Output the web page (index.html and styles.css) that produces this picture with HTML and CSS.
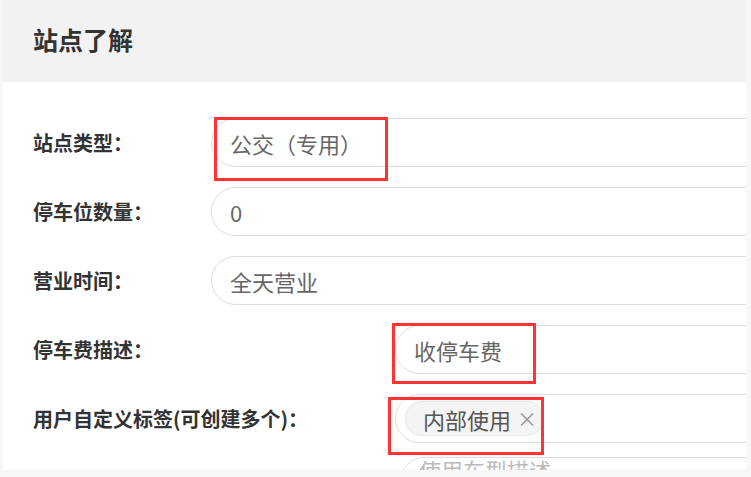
FILE: index.html
```
<!doctype html>
<html>
    <head>
        <meta http-equiv="Content-Type" content="text/html; charset=utf-8">
        <link rel="stylesheet" href="styles.css">
    </head>
    <body>
        <div class="page">
            <div class="panel">
                <div class="panel-head">站点了解</div>
                <div class="panel-body">
                    <div class="row">
                        <div class="label">站点类型：</div>
                        <div class="field">公交（专用）</div>
                    </div>
                    <div class="row">
                        <div class="label">停车位数量：</div>
                        <div class="field">0</div>
                    </div>
                    <div class="row">
                        <div class="label">营业时间：</div>
                        <div class="field">全天营业</div>
                    </div>
                    <div class="row">
                        <div class="label">停车费描述：</div>
                        <div class="field field-far">收停车费</div>
                    </div>
                    <div class="row">
                        <div class="label">用户自定义标签(可创建多个)：</div>
                        <div class="field field-far field-tags">
                            <span class="tag">内部使用<span class="tag-close">×</span></span>
                        </div>
                    </div>
                    <div class="row row-tail">
                        <div class="field field-tail placeholder">使用车型描述</div>
                    </div>
                </div>
            </div>
            <!-- 标注框 -->
            <div class="mark mark-type"></div>
            <div class="mark mark-fee"></div>
            <div class="mark mark-tags"></div>
        </div>
    </body>
</html>
```

FILE: styles.css
```
html, body{
    margin: 0;
    padding: 0;
    background: #f7f7f7;
    font-family: "Noto Sans CJK SC", "Noto Sans", sans-serif;
}
.page{
    position: relative;
    width: 751px;
    height: 477px;
    overflow: hidden;
}
.panel{
    margin: 0 5px 0 3px;
    height: 470px;
    background: #fff;
    overflow: hidden;
}
.panel-head{
    height: 82px;
    line-height: 78px;
    padding-left: 30px;
    background: #f2f2f2;
    color: #333;
    font-size: 25px;
    font-weight: bold;
}
.panel-body{
    padding: 36px 0 0 30px;
}
.row{
    display: flex;
    align-items: center;
    margin-bottom: 20px;
}
.label{
    width: 178px;
    flex: none;
    white-space: nowrap;
    color: #333;
    font-size: 20px;
    font-weight: bold;
}
.field{
    flex: none;
    width: 640px;
    height: 49px;
    box-sizing: border-box;
    border: 1px solid #ddd;
    border-radius: 25px;
    padding-left: 18px;
    display: flex;
    align-items: center;
    color: #666;
    font-size: 22px;
}
.field-far{
    margin-left: 184px;
}
.field-tags{
    padding-left: 9px;
}
.row-tail{
    margin-top: -6px;
}
.field-tail{
    margin-left: 367px;
    align-items: flex-start;
    padding-top: 0;
    line-height: 22px;
}
.placeholder{
    color: #bbb;
}
.tag{
    display: flex;
    align-items: center;
    height: 33px;
    padding: 0 6px 0 17px;
    border: 1px solid #e6e6e6;
    border-radius: 17px;
    background: #f4f4f4;
    color: #555;
}
.tag-close{
    margin-left: 6px;
    color: #999;
    font-size: 20px;
}
.mark{
    position: absolute;
    border: 3px solid #f33;
    box-sizing: border-box;
}
.mark-type{
    left: 214px;
    top: 117px;
    width: 174px;
    height: 64px;
}
.mark-fee{
    left: 392px;
    top: 323px;
    width: 144px;
    height: 61px;
}
.mark-tags{
    left: 388px;
    top: 397px;
    width: 156px;
    height: 58px;
}
```
